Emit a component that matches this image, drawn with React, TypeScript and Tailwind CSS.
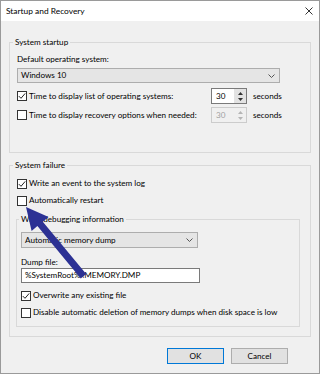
import React from "react";

function Check({ checked }: { checked: boolean }) {
  return (
    <span className="w-[10px] h-[10px] border border-[#333333] bg-white flex items-center justify-center shrink-0">
      {checked && (
        <svg width="8" height="8" viewBox="0 0 8 8">
          <path d="M0.8 4.1 L3 6.3 L7.2 1.4" fill="none" stroke="#222222" strokeWidth="1" />
        </svg>
      )}
    </span>
  );
}

function Chevron() {
  return (
    <svg width="7" height="4" viewBox="0 0 7 4">
      <path d="M0.5 0.5 L3.5 3.5 L6.5 0.5" fill="none" stroke="#555555" strokeWidth="1" />
    </svg>
  );
}

function Spin({ disabled }: { disabled: boolean }) {
  const arrow = disabled ? "#b5b5b5" : "#333333";
  return (
    <div
      className={
        disabled
          ? "w-[36px] h-[16px] flex border border-[#cccccc] bg-[#f0f0f0] shrink-0"
          : "w-[36px] h-[16px] flex border border-[#7a7a7a] bg-white shrink-0"
      }
    >
      <div
        className={
          disabled
            ? "flex-1 pl-[4px] flex items-center text-[#a0a0a0]"
            : "flex-1 pl-[4px] flex items-center"
        }
      >
        30
      </div>
      <div
        className={
          disabled
            ? "w-[12px] flex flex-col items-center justify-center gap-[3px] bg-[#f0f0f0]"
            : "w-[12px] flex flex-col items-center justify-center gap-[3px] bg-[#e3e3e3]"
        }
      >
        <svg width="5" height="3" viewBox="0 0 5 3">
          <path d="M0 3 L2.5 0 L5 3 Z" fill={arrow} />
        </svg>
        <svg width="5" height="3" viewBox="0 0 5 3">
          <path d="M0 0 L2.5 3 L5 0 Z" fill={arrow} />
        </svg>
      </div>
    </div>
  );
}

export default function App() {
  return (
    <div className="relative w-[320px] h-[374px] overflow-hidden border border-[#9a9a9a] bg-[#f0f0f0] font-['Lato',sans-serif] text-[8.15px] leading-[11px] text-black flex flex-col">
      <div className="h-[20px] shrink-0 bg-white flex items-center justify-between pl-[5px] pr-[6px]">
        <span className="text-[8.4px]">Startup and Recovery</span>
        <svg width="8" height="8" viewBox="0 0 8 8">
          <path d="M0.5 0.5 L7.5 7.5 M7.5 0.5 L0.5 7.5" stroke="#333333" strokeWidth="1" />
        </svg>
      </div>

      <div className="flex-1 flex flex-col px-[8px]">
        <fieldset className="mt-[16px] border border-[#d9d9d9] pl-[7px] pr-[7px] pt-[6px] pb-[29px]">
          <legend className="ml-[-4px] px-[2px]">System startup</legend>
          <div>Default operating system:</div>
          <div className="mt-[3px] h-[15px] w-[263px] border border-[#adadad] bg-[#e5e5e5] flex items-center justify-between pl-[3px] pr-[4px]">
            <span>Windows 10</span>
            <Chevron />
          </div>
          <div className="mt-[5px] h-[16px] flex items-center">
            <Check checked={true} />
            <span className="ml-[2px] w-[182px] shrink-0">Time to display list of operating systems:</span>
            <Spin disabled={false} />
            <span className="ml-[6px]">seconds</span>
          </div>
          <div className="mt-[3px] h-[16px] flex items-center">
            <Check checked={false} />
            <span className="ml-[2px] w-[182px] shrink-0">Time to display recovery options when needed:</span>
            <Spin disabled={true} />
            <span className="ml-[6px]">seconds</span>
          </div>
        </fieldset>

        <fieldset className="mt-[7px] border border-[#d9d9d9] pl-[7px] pr-[7px] pt-[7px] pb-[9px]">
          <legend className="ml-[-4px] px-[2px]">System failure</legend>
          <div className="h-[11px] flex items-center">
            <Check checked={true} />
            <span className="ml-[2px]">Write an event to the system log</span>
          </div>
          <div className="mt-[6px] h-[11px] flex items-center">
            <Check checked={false} />
            <span className="ml-[2px]">Automatically restart</span>
          </div>

          <fieldset className="mt-[8px] ml-[-1px] w-[284px] border border-[#d9d9d9] pl-[4px] pr-[4px] pt-[7px] pb-[8px]">
            <legend className="ml-[-2px] px-[2px]">Write debugging information</legend>
            <div className="h-[16px] w-[177px] border border-[#adadad] bg-[#e5e5e5] flex items-center justify-between pl-[3px] pr-[4px]">
              <span>Automatic memory dump</span>
              <Chevron />
            </div>
            <div className="mt-[9px]">Dump file:</div>
            <div className="h-[15px] w-[179px] border border-[#7a7a7a] bg-white flex items-center pl-[3px]">
              %SystemRoot%\MEMORY.DMP
            </div>
            <div className="mt-[7px] h-[11px] flex items-center">
              <Check checked={true} />
              <span className="ml-[2px]">Overwrite any existing file</span>
            </div>
            <div className="mt-[6px] h-[11px] flex items-center">
              <Check checked={false} />
              <span className="ml-[2px]">Disable automatic deletion of memory dumps when disk space is low</span>
            </div>
          </fieldset>
        </fieldset>

        <div className="mt-[11px] flex justify-end gap-[7px] pr-[23px]">
          <button className="w-[57px] h-[16px] border border-[#0078d7] bg-[#e1e1e1] flex items-center justify-center">
            OK
          </button>
          <button className="w-[57px] h-[16px] border border-[#adadad] bg-[#e1e1e1] flex items-center justify-center">
            Cancel
          </button>
        </div>
      </div>

      <svg className="absolute left-0 top-0 pointer-events-none" width="320" height="374" viewBox="0 0 320 374">
        <polygon
          points="25,206 47.6,215.9 41.8,220.7 85.2,273 79.8,277.4 36.4,225.1 30.6,229.9"
          fill="#2c3194"
        />
      </svg>
    </div>
  );
}
